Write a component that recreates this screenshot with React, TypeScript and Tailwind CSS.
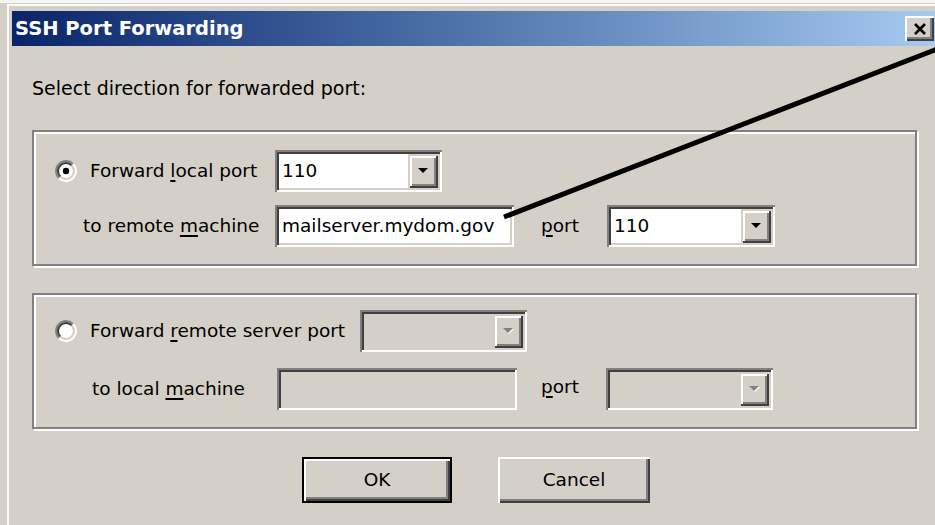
import React from "react";

const sunken =
  "shadow-[inset_2px_2px_0_#808080,inset_-2px_-2px_0_#ffffff,inset_4px_4px_0_#404040,inset_-4px_-4px_0_#d4d0c8]";
const raised =
  "shadow-[inset_2px_2px_0_#ffffff,inset_-2px_-2px_0_#404040,inset_-4px_-4px_0_#808080]";
const raisedInner =
  "shadow-[inset_2px_2px_0_#d4d0c8,inset_-2px_-2px_0_#404040,inset_4px_4px_0_#ffffff,inset_-4px_-4px_0_#808080]";

function Radio({ checked }: { checked?: boolean }) {
  return (
    <svg width="22" height="22" viewBox="0 0 22 22" className="shrink-0">
      <circle cx="11" cy="11" r="7" fill="#ffffff" />
      <path d="M3.93 18.07 A10 10 0 0 1 18.07 3.93" stroke="#808080" strokeWidth="2" fill="none" />
      <path d="M18.07 3.93 A10 10 0 0 1 3.93 18.07" stroke="#ffffff" strokeWidth="2" fill="none" />
      <path d="M5.34 16.66 A8 8 0 0 1 16.66 5.34" stroke="#404040" strokeWidth="2" fill="none" />
      <path d="M16.66 5.34 A8 8 0 0 1 5.34 16.66" stroke="#d4d0c8" strokeWidth="2" fill="none" />
      {checked && <circle cx="11" cy="11" r="3.2" fill="#000000" />}
    </svg>
  );
}

function DropArrow({ disabled }: { disabled?: boolean }) {
  return (
    <svg width="12" height="8" viewBox="0 0 12 8">
      {disabled && <path d="M2 2 L12 2 L7 7 Z" fill="#ffffff" />}
      <path d="M1 1 L11 1 L6 6 Z" fill={disabled ? "#808080" : "#000000"} />
    </svg>
  );
}

function Combo({ value, disabled, w }: { value?: string; disabled?: boolean; w: string }) {
  return (
    <div
      className={`${w} h-[42px] flex items-stretch p-[4px] shrink-0 ${sunken} ${
        disabled ? "bg-[#d4d0c8]" : "bg-white"
      }`}
    >
      <div className="flex-1 flex items-center pl-[3px] text-black">{value}</div>
      <div className={`w-[30px] flex items-center justify-center bg-[#d4d0c8] ${raisedInner}`}>
        <DropArrow disabled={disabled} />
      </div>
    </div>
  );
}

function Field({ value, disabled, w }: { value?: string; disabled?: boolean; w: string }) {
  return (
    <div
      className={`${w} h-[42px] flex items-center pl-[7px] shrink-0 ${sunken} ${
        disabled ? "bg-[#d4d0c8]" : "bg-white"
      }`}
    >
      {value}
    </div>
  );
}

function Btn({ label, isDefault, w }: { label: string; isDefault?: boolean; w: string }) {
  return (
    <div className={`${w} h-[46px] ${isDefault ? "border-2 border-black" : ""}`}>
      <div className={`w-full h-full flex items-center justify-center bg-[#d4d0c8] ${raised}`}>{label}</div>
    </div>
  );
}

const U = ({ children }: { children: React.ReactNode }) => (
  <span className="underline underline-offset-[3px] decoration-[1.5px]">{children}</span>
);

const group =
  "w-[885px] h-[136px] border-2 border-[#808080] shadow-[inset_2px_2px_0_#ffffff,2px_2px_0_#ffffff]";

export default function App() {
  return (
    <div
      className="relative w-[935px] h-[525px] overflow-hidden bg-[#d4d0c8] text-black text-[18.5px]"
      style={{ fontFamily: '"DejaVu Sans", Verdana, sans-serif' }}
    >
      <div className="h-[3px] bg-[#f6f5f2]" />
      <div className="ml-[7px] mt-[1px] h-full border-l-2 border-t-2 border-[#fbfaf8] pt-[5px] pl-[3px]">
        {/* title bar */}
        <div className="h-[35px] flex items-center justify-between bg-gradient-to-r from-[#0a246a] to-[#a6caf0] pl-[3px] pr-[1px]">
          <span className="text-white font-bold text-[19.5px]">SSH Port Forwarding</span>
          <div className={`w-[29px] h-[25px] flex items-center justify-center bg-[#d4d0c8] ${raised}`}>
            <svg width="14" height="12" viewBox="0 0 14 12">
              <path d="M2 1 L12 11 M12 1 L2 11" stroke="#000000" strokeWidth="2.6" />
            </svg>
          </div>
        </div>

        {/* dialog body */}
        <div className="pl-[20px]">
          <div className="mt-[31px] leading-[22px] text-[19px]">Select direction for forwarded port:</div>

          <div className={`mt-[31px] ${group}`}>
            <div className="pt-[18px] flex items-center h-[60px]">
              <div className="ml-[21px]">
                <Radio checked />
              </div>
              <div className="ml-[13px] w-[185px]">
                Forward <U>l</U>ocal port
              </div>
              <Combo value="110" w="w-[167px]" />
            </div>
            <div className="mt-[13px] flex items-center h-[42px]">
              <div className="ml-[49px] w-[192px]">
                to remote <U>m</U>achine
              </div>
              <Field value="mailserver.mydom.gov" w="w-[239px]" />
              <div className="ml-[27px] w-[66px]">
                <U>p</U>ort
              </div>
              <Combo value="110" w="w-[168px]" />
            </div>
          </div>

          <div className={`mt-[27px] ${group}`}>
            <div className="pt-[15px] flex items-center h-[57px]">
              <div className="ml-[21px]">
                <Radio />
              </div>
              <div className="ml-[13px] w-[270px]">
                Forward <U>r</U>emote server port
              </div>
              <Combo disabled w="w-[167px]" />
            </div>
            <div className="mt-[16px] flex items-center h-[42px]">
              <div className="ml-[58px] w-[185px]">
                to local <U>m</U>achine
              </div>
              <Field disabled w="w-[240px]" />
              <div className="ml-[24px] w-[65px] -mt-[4px]">
                <U>p</U>ort
              </div>
              <Combo disabled w="w-[167px]" />
            </div>
          </div>

          <div className="mt-[28px] flex">
            <div className="ml-[270px]">
              <Btn label="OK" isDefault w="w-[150px]" />
            </div>
            <div className="ml-[46px]">
              <Btn label="Cancel" w="w-[152px]" />
            </div>
          </div>
        </div>
      </div>

      {/* callout pointer */}
      <svg className="absolute inset-0 pointer-events-none" width="935" height="525" viewBox="0 0 935 525">
        <line x1="504" y1="217" x2="945" y2="46" stroke="#000000" strokeWidth="5" />
      </svg>
    </div>
  );
}
